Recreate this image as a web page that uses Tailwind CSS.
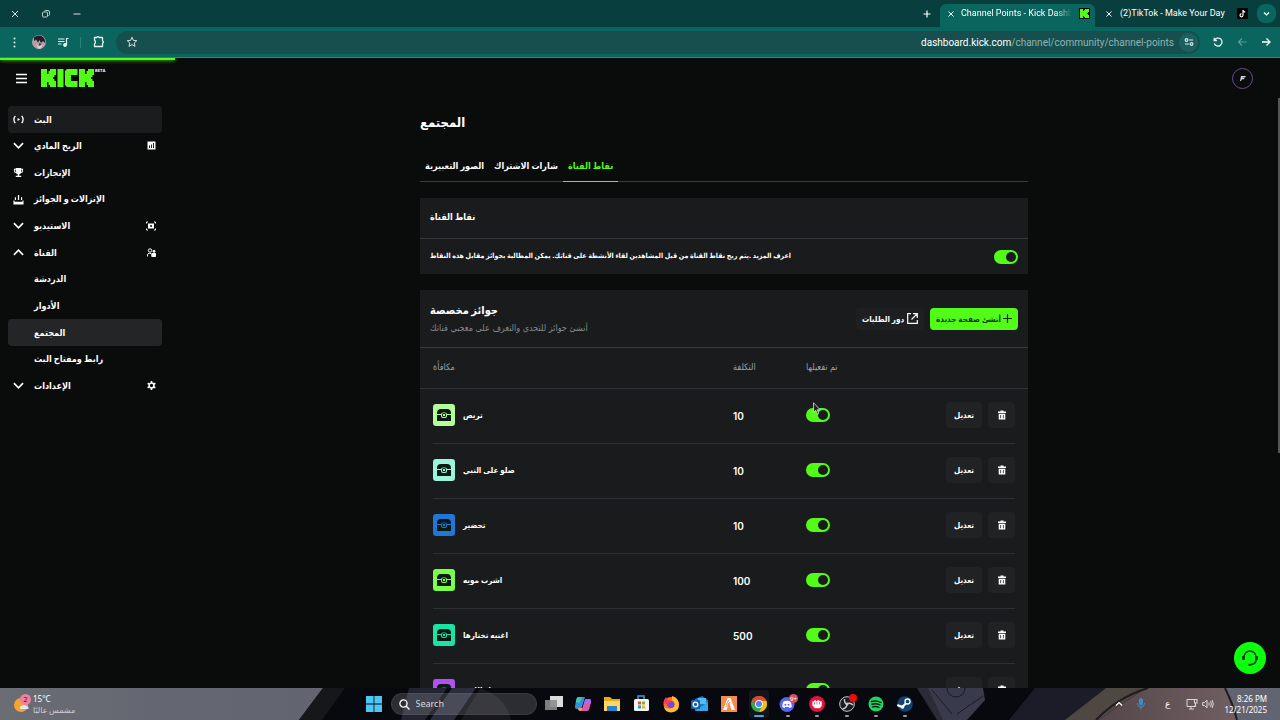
<!DOCTYPE html>
<html lang="ar">

<head>
    <meta charset="utf-8">
    <script src="https://cdn.jsdelivr.net/npm/@tailwindcss/browser@4"></script>
    <title>Channel Points - Kick Dashboard</title>
</head>

<body class="h-screen overflow-hidden flex flex-col bg-[#0a0b0b] text-white font-['Inter','DejaVu_Sans_Condensed',sans-serif]">

    <!-- browser tabs -->
    <header class="font-['Roboto',sans-serif]">
        <div class="h-[27px] bg-[#083e3d] flex items-end justify-between pl-2 pr-1">
            <div class="flex items-center gap-[17px] h-[27px]">
                <button aria-label="Close"><svg class="size-[14px]" viewBox="0 0 14 14" fill="none" stroke="#d5e4e3"><path d="M4 4l6 6M10 4l-6 6" /></svg></button>
                <button aria-label="Restore"><svg class="size-[14px]" viewBox="0 0 14 14" fill="none" stroke="#b9cfce"><rect x="3.5" y="5" width="5" height="5" rx="1" /><path d="M5.500 4.500q0-1 1-1h2.500q1.500 0 1.500 1.500v2.500q0 1-1 1" /></svg></button>
                <button aria-label="Minimize"><svg class="size-[14px]" viewBox="0 0 14 14" fill="none" stroke="#d5e4e3"><path d="M3.500 7h7" /></svg></button>
            </div>
            <div class="flex items-end">
                <button class="h-[27px] w-[26px] flex items-center justify-center" aria-label="New tab"><svg class="size-[8px]" viewBox="0 0 8 8" stroke="#fff" stroke-width="1.200"><path d="M4 .5v7M.5 4h7" /></svg></button>
                <div class="h-[23px] w-[155px] bg-[#0b655f] rounded-t-md flex items-center pl-2 pr-[5px] pb-1 gap-[7px]">
                    <button aria-label="Close tab"><svg class="size-[6px]" viewBox="0 0 6 6" stroke="#fff"><path d="M.5.5l5 5M5.500.5l-5 5" /></svg></button>
                    <span class="flex-1 text-[9px] whitespace-nowrap overflow-hidden mask-r-from-85%">Channel Points - Kick Dashboard</span>
                    <svg class="size-[11px]" viewBox="0 0 11 11"><rect width="11" height="11" fill="#000" /><path fill="#53fc18" d="M1 1h3v2h1V2h1V1h4v3H9v1H8v1h1v1h1v3H6V9H5V8H4v2H1z" /></svg>
                </div>
                <div class="h-[23px] w-[158px] flex items-center pl-[11px] pr-[5px] pb-1 gap-[8px]">
                    <button aria-label="Close tab"><svg class="size-[6px]" viewBox="0 0 6 6" stroke="#fff"><path d="M.5.5l5 5M5.500.5l-5 5" /></svg></button>
                    <span class="flex-1 text-[9px] whitespace-nowrap">(2)TikTok - Make Your Day</span>
                    <svg class="size-[11px]" viewBox="0 0 11 11"><rect width="11" height="11" fill="#000" /><path d="M6 2v5.300a1.500 1.500 0 1 1-1.500-1.500M6 2.200q.3 1.800 2.200 2" fill="none" stroke="#fff" stroke-width="1.200" /></svg>
                </div>
                <button class="mb-1 ml-1 size-[19px] rounded-lg bg-[#0b655f] flex items-center justify-center" aria-label="Search tabs"><svg class="size-[7px]" viewBox="0 0 7 7" fill="none" stroke="#fff" stroke-width="1.200"><path d="M1 2.500l2.500 2.500L6 2.500" /></svg></button>
            </div>
        </div>
        <!-- toolbar -->
        <div class="h-[31px] bg-[#0b655f] border-b border-[#3d7d79] flex items-center px-[8px]">
            <button aria-label="Menu"><svg class="size-[13px]" viewBox="0 0 13 13" fill="#e3f1f0"><circle cx="6.500" cy="2.500" r="1" /><circle cx="6.500" cy="6.500" r="1" /><circle cx="6.500" cy="10.500" r="1" /></svg></button>
            <button class="ml-[11px]" aria-label="Profile">
                <svg class="size-[14px]" viewBox="0 0 14 14"><circle cx="7" cy="7" r="7" fill="#b79ba6" /><path d="M2 2.500Q7-1.500 12 3q1.500 3 1 5L11 6 9 8 7.500 5 6 7.500 4 4.500 2 6z" fill="#221e25" /><path d="M4 9l3 2.500L11 9l-2 4.500-3 .3z" fill="#e0c9d0" /><path d="M7 8l2.500 1-2 2z" fill="#3c2b35" /></svg>
            </button>
            <button class="ml-[11px]" aria-label="Media"><svg class="size-[12px]" viewBox="0 0 12 12" fill="none" stroke="#e3f1f0" stroke-width="1.200"><path d="M1 3h6.500M1 5.500h6.500M1 8h3.500M9.500 9V2.500h2" /><circle cx="8" cy="9" r="1.300" fill="#e3f1f0" /></svg></button>
            <span class="ml-[11px] w-px h-[11px] bg-[#2d817b]"></span>
            <button class="ml-[11px]" aria-label="Extensions"><svg class="size-[14px]" viewBox="0 0 14 14" fill="none" stroke="#e3f1f0" stroke-width="1.300"><path d="M2.500 2.500h2.200q1.300-1.800 2.600 0h3.200v3.200q2 1.300 0 2.600v3.200h-8V8.800q2-1.800 0-3.600z" stroke-linejoin="round" /></svg></button>
            <div class="ml-[10px] flex-1 h-[23px] rounded-full bg-[#174f4e] flex items-center pl-[10px] pr-[2px]">
                <button aria-label="Bookmark"><svg class="size-[12px]" viewBox="0 0 12 12" fill="none" stroke="#cfe2e1"><path d="M6 1.200l1.400 3.200 3.400.3-2.600 2.300.8 3.400-3-1.800-3 1.800.8-3.400L1.200 4.700l3.400-.3z" /></svg></button>
                <span class="flex-1 text-right text-[10px] text-[#8fb4b2]"><span class="text-white">dashboard.kick.com</span>/channel/community/channel-points</span>
                <button class="ml-[5px] size-[19px] rounded-full bg-[#1c615f] flex items-center justify-center" aria-label="Site information"><svg class="size-[10px]" viewBox="0 0 10 10" fill="none" stroke="#dcebea" stroke-width="1.200"><circle cx="2.500" cy="3" r="1.300" /><path d="M5 3h4M1 7h4" /><circle cx="7.500" cy="7" r="1.300" /></svg></button>
            </div>
            <div class="flex items-center gap-[12px] ml-[12px]">
                <button aria-label="Reload"><svg class="size-[12px]" viewBox="0 0 12 12" fill="none" stroke="#e3f1f0" stroke-width="1.300"><path d="M2.500 4.200A4 4 0 1 1 2.300 7.500M2.200 1.800v2.700h2.700" /></svg></button>
                <button aria-label="Forward"><svg class="size-[12px]" viewBox="0 0 12 12" fill="none" stroke="#5b9c97" stroke-width="1.200"><path d="M10.500 6h-8M6 2.500L2.500 6 6 9.500" /></svg></button>
                <button aria-label="Back"><svg class="size-[12px]" viewBox="0 0 12 12" fill="none" stroke="#fff" stroke-width="1.300"><path d="M2 6h8M6.500 2.500L10 6 6.500 9.500" /></svg></button>
            </div>
        </div>
    </header>

    <div class="relative flex-1 min-h-0 overflow-hidden">
        <!-- page load bar -->
        <div class="absolute -top-px left-0 h-[3px] w-[175px] bg-[#53fc18] shadow-[0_0_4px_#53fc18]"></div>

        <div class="h-10 flex items-center justify-between pl-[15px] pr-[27px]">
            <div class="flex items-center gap-[13px]">
                <button aria-label="القائمة"><svg class="size-[13px]" viewBox="0 0 13 13" stroke="#fff" stroke-width="1.300"><path d="M1 2.500h11M1 6.500h11M1 10.500h11" /></svg></button>
                <a href="#" class="flex items-start gap-px" aria-label="Kick">
                    <svg class="w-[53px] h-[18px]" viewBox="0 0 53 18" fill="#53fc18"><path d="M0 0h6v5h1.500V2H9V0h6v6h-1.500v2H12v2h1.500v2H15v6H9v-2H7.500v-3H6v5H0zM16.500 0h6v18h-6zM26 0h10.500v6H30v6h6.500v6H26l-2-2V2zM38 0h6v5h1.500V2H47V0h6v6h-1.500v2H50v2h1.500v2H53v6h-6v-2h-1.500v-3H44v5h-6z" /></svg>
                    <span class="text-[4px] leading-[4px] font-bold">BETA</span>
                </a>
            </div>
            <button class="size-[21px] rounded-full border border-[#6c4c96] flex items-center justify-center" aria-label="الحساب"><svg class="w-[6px] h-[5px]" viewBox="0 0 6 5" fill="#d9d2ea"><path d="M1 0h5L5 1.500H2.500V2h2L4 3.200H2L1 5H0z" /></svg></button>
        </div>

        <div class="flex">
            <nav class="w-[170px] shrink-0 pt-2 px-2">
                <ul id="menu" class="grid auto-rows-fr h-[293px] text-[9px] font-bold"></ul>
            </nav>

            <main class="flex-1 flex justify-center pr-[2px]">
                <div class="w-full max-w-[608px] pt-[14px]">
                    <h1 class="text-[13px] leading-[20px] font-bold">المجتمع</h1>

                    <div class="mt-[18px] h-8 flex border-b border-[#3a3c3f] text-[9px] font-bold">
                        <a href="#" class="px-[5px] leading-[31px]">الصور التعبيرية</a>
                        <a href="#" class="px-[5px] leading-[31px]">شارات الاشتراك</a>
                        <a href="#" class="px-[5px] leading-[31px] h-8 border-b border-[#53fc18] text-[#53fc18]">نقاط القناة</a>
                    </div>

                    <section class="mt-4 bg-[#191b1d]">
                        <h2 class="h-10 px-[10px] leading-[38px] text-[9px] font-bold">نقاط القناة</h2>
                        <div class="h-9 px-[10px] border-t border-[#333639] flex items-center justify-between">
                            <label for="points" dir="rtl" class="text-[7px] font-bold">اعرف المزيد .يتم ربح نقاط القناة من قبل المشاهدين لقاء الأنشطة على قناتك. يمكن المطالبة بجوائز مقابل هذه النقاط</label>
                            <input type="checkbox" id="points" checked class="appearance-none w-6 h-[14px] rounded-full bg-[#53fc18] flex items-center justify-end pr-[2px] before:size-[10px] before:rounded-full before:bg-[#191b1d]">
                        </div>
                    </section>

                    <section class="mt-4 bg-[#191b1d]">
                        <div class="h-[57px] px-[10px] flex items-center justify-between">
                            <div>
                                <h2 class="text-[11px] leading-[18px] font-bold">جوائز مخصصة</h2>
                                <p class="text-[9px] leading-[18px] text-[#85898d]">أنشئ جوائز للتحدي والتعرف على معجبي قناتك</p>
                            </div>
                            <div class="flex gap-[6px] text-[8px] font-bold whitespace-nowrap">
                                <button class="h-[22px] w-[68px] rounded-sm bg-[#1d1f21] flex items-center justify-center gap-[3px]">دور الطلبات
                                    <svg class="size-[11px] shrink-0" viewBox="0 0 11 11" fill="none" stroke="#fff" stroke-width="1.200"><path d="M4 .7H.7v9.600h9.600V7M6 .7h4.300V5M10.300.7L4.500 6.500" /></svg>
                                </button>
                                <button class="h-[22px] w-[88px] rounded-sm bg-[#53fc18] text-[#12310a] flex items-center justify-center gap-[2px]">أنشئ صفحة جديدة
                                    <svg class="size-[9px] shrink-0" viewBox="0 0 10 10" stroke="#0d2507" stroke-width="1.300"><path d="M5 0v10M0 5h10" /></svg>
                                </button>
                            </div>
                        </div>
                        <table class="w-full table-fixed border-t border-[#3a3c3f] text-left">
                            <thead>
                                <tr class="h-[41px] border-b border-[#303235] text-[9px] text-[#9aa1a8]">
                                    <td class="w-[13px]"></td>
                                    <th class="w-[300px] pb-[3px] font-medium">مكافأة</th>
                                    <th class="w-[73px] pb-[3px] font-medium">التكلفة</th>
                                    <th class="pb-[3px] font-medium">تم تفعيلها</th>
                                    <td></td>
                                    <td class="w-[13px]"></td>
                                </tr>
                            </thead>
                            <tbody id="rewards"></tbody>
                        </table>
                    </section>
                </div>
            </main>
        </div>

        <div class="absolute right-0 top-10 w-[2px] h-[355px] bg-[#55585b]"></div>

        <button class="absolute right-[14px] bottom-[14px] size-8 rounded-full bg-[#0cff0c] flex items-center justify-center" aria-label="الدعم">
            <svg class="size-[18px]" viewBox="0 0 18 18" fill="none" stroke="#063806" stroke-width="1.500"><path d="M3 11V8a6 6 0 0 1 12 0v3q0 4-5 4.500" /><path d="M2.200 7v4M15.800 7v4" stroke-width="2.200" /><path d="M7.500 15.800h3" stroke-width="2" /></svg>
        </button>

        <!-- mouse pointer -->
        <svg class="absolute left-[813px] top-[344px] w-[8px] h-[13px]" viewBox="0 0 8 13" fill="#222" stroke="#ddd" stroke-width=".8"><path d="M.5.7v9.600l2.200-2 1.600 3.700 1.500-.6-1.600-3.600h3z" /></svg>
    </div>

    <!-- taskbar -->
    <footer class="relative h-8 bg-[#08090f] font-['Noto_Sans','DejaVu_Sans',sans-serif]">
        <svg class="absolute inset-0 w-full h-full" viewBox="0 0 1280 32" preserveAspectRatio="none">
            <defs>
                <linearGradient id="sky"><stop offset="0" stop-color="#6b6d73" /><stop offset=".5" stop-color="#646672" /><stop offset="1" stop-color="#62656f" /></linearGradient>
                <linearGradient id="skin"><stop offset="0" stop-color="#54474a" /><stop offset="1" stop-color="#705f63" /></linearGradient>
            </defs>
            <path d="M0 0h323l-24 32H0z" fill="url(#sky)" />
            <path d="M323 0h22l-23 32h-23z" fill="#15171b" />
            <path d="M409 0h38l-22 32h-24z" fill="#222431" />
            <path d="M452 0h24l-22 32h-24z" fill="#2b2c3c" />
            <path d="M480 0q25 8 31 32h-50z" fill="#17171e" />
            <path d="M917 0h26l22 32h-28z" fill="#2b2c37" />
            <path d="M928 0h55l2 12-18 20h-24z" fill="#393a4c" />
            <path d="M1035 0h71l-40 32h-57z" fill="#1c1c29" />
            <path d="M1106 0h40l-48 32h-33z" fill="#4f4742" />
            <path d="M1146 0h82l9 32h-139z" fill="url(#skin)" />
            <path d="M1226 0h54v32h-43z" fill="#626471" />
            <path d="M1148 0q-30 9-52 32M1225 0q8 16 12 32" fill="none" stroke="#211c20" stroke-width="2" />
            <circle cx="956" cy="0" r="9" fill="none" stroke="#191a24" />
            <path d="M932 2l20 24M957 26l26-18" stroke="#191a24" />
        </svg>

        <div class="relative h-full grid grid-cols-[1fr_auto_1fr] items-center">
            <div class="flex items-center pl-[13px] gap-[2px]">
                <svg class="w-[18px] h-[20px]" viewBox="0 0 18 20"><circle cx="8" cy="11" r="7" fill="#f4a52e" /><path d="M7 15q-.5-3 2-3 2-2.500 4 0 3 0 2.500 3z" fill="#dfe7f6" /><circle cx="12.500" cy="5.500" r="5.500" fill="#ee7fa0" /><text x="12.500" y="8" font-size="7" text-anchor="middle" fill="#3c1420">2</text></svg>
                <div class="text-[8px] leading-[11px]">
                    <div>15°C</div>
                    <div class="text-[#cdced4]">مشمس غالبًا</div>
                </div>
            </div>

            <div class="flex items-center gap-[8px]">
                <button aria-label="Start"><svg class="w-[18px] h-[16px]" viewBox="0 0 16 16"><path fill="#4fc7f5" d="M0 0h7.600v7.600H0zM8.400 0H16v7.600H8.400zM0 8.400h7.600V16H0zM8.400 8.400H16V16H8.400z" /></svg></button>
                <label class="w-[146px] h-[22px] rounded-full bg-white/15 border border-white/5 flex items-center pl-[7px] gap-[6px]">
                    <svg class="size-[11px] shrink-0" viewBox="0 0 11 11" fill="none" stroke="#fff" stroke-width="1.300"><circle cx="4.500" cy="4.500" r="3.600" /><path d="M7.200 7.200L10.500 10.500" /></svg>
                    <input type="text" placeholder="Search" aria-label="Search" class="w-full bg-transparent text-[9px] placeholder:text-[#d9d9dd] outline-none">
                </label>
                <div id="apps" class="flex justify-between w-[372px] h-8 items-center -ml-px"></div>
            </div>

            <div class="flex items-center justify-end pr-[13px]">
                <svg class="w-[8px] h-[6px] mr-[14px]" viewBox="0 0 8 6" fill="none" stroke="#fff" stroke-width="1.200"><path d="M1 4.500l3-3 3 3" /></svg>
                <svg class="w-[8px] h-[12px] mr-[20px]" viewBox="0 0 8 12" fill="none" stroke="#4489c8"><rect x="2.500" y=".5" width="3" height="6.500" rx="1.500" fill="#4489c8" /><path d="M.5 5q0 4 3.500 4t3.500-4M4 9v2.500" /></svg>
                <span class="text-[9px] mr-[16px]">ع</span>
                <svg class="size-[12px] mr-[4px]" viewBox="0 0 12 12" fill="none" stroke="#ddd8da"><path d="M8 1.500H1v7h8V7M3 11h5M5 8.500V11M9.500 5v4" /><rect x="8.500" y="1.500" width="2.500" height="3.500" /></svg>
                <svg class="w-[12px] h-[10px] mr-[10px]" viewBox="0 0 12 10" fill="none" stroke="#ddd8da"><path d="M.7 3.500v3h2L5 9V1L2.700 3.500zM6.800 3.500q1 1.500 0 3M8.500 2.200q2 2.800 0 5.600M10 1q2.800 4 0 8" /></svg>
                <div class="text-[8px] leading-[11px] text-right">
                    <div>8:26 PM</div>
                    <div>12/21/2025</div>
                </div>
            </div>
        </div>
    </footer>
</body>
<script>
    const down = `<svg class="size-[11px]" viewBox="0 0 12 12" fill="none" stroke="#fff" stroke-width="1.800"><path d="M1 3.500l5 5 5-5" /></svg>`;
    const up = `<svg class="size-[11px]" viewBox="0 0 12 12" fill="none" stroke="#fff" stroke-width="1.800"><path d="M1 8.500l5-5 5 5" /></svg>`;
    const live = `<svg class="size-[11px]" viewBox="0 0 12 12" fill="none" stroke="#fff" stroke-width="1.400"><path d="M2.500 2Q-.5 6 2.500 10M9.500 2q3 4 0 8" /><path d="M5 4.300v3.400L7.800 6z" fill="#fff" stroke="none" /></svg>`;
    const trophy = `<svg class="size-[11px]" viewBox="0 0 12 12" fill="#fff"><path d="M3 1h6v1h2v2.500Q11 6.200 8.700 6.500 8 7.700 6.800 8v1.500H9V11H3V9.500h2.200V8Q4 7.700 3.300 6.500 1 6.200 1 4.500V2h2zM2 3v1.500q0 .7 1 .9V3zm7 0v2.400q1-.2 1-.9V3z" fill-rule="evenodd" /></svg>`;
    const drops = `<svg class="size-[11px]" viewBox="0 0 12 12" fill="#fff"><path d="M.5 7h1.200v1.500h8.600V7h1.200v4.500H.5zM5.300 1h1.400v5.500H5.300zM2 3.500h1.300v3H2zM8.700 3.500H10v3H8.700z" /></svg>`;
    const chart = `<svg class="size-[9px]" viewBox="0 0 9 9"><path d="M.5.5h8v8h-8z" fill="#fff" /><path d="M2 4.500h1V7H2zM4 3.500h1V7H4zM6 2h1v5H6z" fill="#222" /></svg>`;
    const studio = `<svg class="size-[10px]" viewBox="0 0 10 10" fill="none" stroke="#fff"><path d="M.5 2.500v-1.500h1.500M8 1h1.500v1.500M9.500 7.500V9H8M2 9H.5V7.500" /><rect x="2" y="2.500" width="6" height="5" fill="#fff" stroke="none" /><circle cx="5" cy="5" r="1" fill="#111" stroke="none" /></svg>`;
    const people = `<svg class="size-[9px]" viewBox="0 0 9 9" fill="none" stroke="#fff"><circle cx="3" cy="2.500" r="1.700" /><path d="M.5 8.500v-2q0-1 2-1H4" /><circle cx="7" cy="3.300" r="1" fill="#fff" /><path d="M4.800 5.500h3.700v3H4.800z" fill="#fff" /></svg>`;
    const gear = `<svg class="size-[9px]" viewBox="0 0 10 10"><circle cx="5" cy="5" r="2.700" fill="none" stroke="#fff" stroke-width="1.700" /><path d="M5 0v2M5 8v2M.7 2.500l1.700 1M7.600 6.500l1.700 1M.7 7.500l1.700-1M7.600 3.500l1.700-1" stroke="#fff" stroke-width="1.800" /></svg>`;

    const menu = [
        { text: "البث", icon: live, bg: "bg-[#1b1c1d]" },
        { text: "الربح المادي", icon: down, end: chart },
        { text: "الإنجازات", icon: trophy },
        { text: "الإنزالات و الجوائز", icon: drops },
        { text: "الاستيديو", icon: down, end: studio },
        { text: "القناة", icon: up, end: people },
        { text: "الدردشة" },
        { text: "الأدوار" },
        { text: "المجتمع", bg: "bg-[#232527]" },
        { text: "رابط ومفتاح البث" },
        { text: "الإعدادات", icon: down, end: gear },
    ];

    document.getElementById("menu").innerHTML = menu.map((item) => `
        <li class="flex">
            <a href="#" class="flex-1 flex items-center rounded-sm pl-[5px] pr-[6px] ${item.bg || ""}">
                <span class="w-[21px]">${item.icon || ""}</span>
                <span class="flex-1 whitespace-nowrap">${item.text}</span>
                ${item.end || ""}
            </a>
        </li>
    `).join("");

    const rewards = [
        { name: "تريص", cost: 10, color: "#b5fd98" },
        { name: "صلو على النبي", cost: 10, color: "#9af5dc" },
        { name: "تحضير", cost: 10, color: "#1f77d8" },
        { name: "اشرب مويه", cost: 100, color: "#7bfd4b" },
        { name: "اغنيه تختارها", cost: 500, color: "#1be3a5" },
        { name: "تختار اللعبة", cost: "", color: "#b052f0" },
    ];

    document.getElementById("rewards").innerHTML = rewards.map((reward, i) => `
        <tr class="h-[55px] text-[10px] font-semibold">
            <td></td>
            <td class="border-b border-[#2d2f32] pb-[2px]">
                <div class="flex items-center gap-2 text-[8px] font-bold">
                    <svg class="size-[22px]" viewBox="0 0 22 22">
                        <rect width="22" height="22" rx="3" fill="${reward.color}" />
                        <path d="M4 10V9q0-4 4-4h6q4 0 4 4v1zM4 11h14v6H4z" fill="#0a1a12" />
                        <rect x="8" y="8.500" width="6" height="5.500" rx="2" fill="${reward.color}" />
                        <rect x="9" y="9" width="4" height="4" rx="1.500" fill="#0a1a12" />
                        <rect x="10" y="10" width="2" height="2" fill="${reward.color}" />
                    </svg>
                    ${reward.name}
                </div>
            </td>
            <td class="border-b border-[#2d2f32]">${reward.cost}</td>
            <td class="border-b border-[#2d2f32] pb-[3px]">
                <input type="checkbox" checked aria-label="${reward.name}" id="reward_${i}"
                    class="appearance-none w-6 h-[14px] rounded-full bg-[#53fc18] flex items-center justify-end pr-[2px] before:size-[10px] before:rounded-full before:bg-[#191b1d]">
            </td>
            <td class="border-b border-[#2d2f32] pb-[2px]">
                <div class="flex justify-end gap-[6px]">
                    <button class="w-[36px] h-[26px] rounded-sm bg-[#202224] text-[8px] font-bold">تعديل</button>
                    <button class="w-[27px] h-[26px] rounded-sm bg-[#202224] flex items-center justify-center" aria-label="حذف">
                        <svg class="w-[8px] h-[10px]" viewBox="0 0 8 10" fill="#fff"><path d="M2.500.5h3v1H8V3H0V1.500h2.500zM.7 3.700h6.600v5.800H.7zM2.300 5v3.300h.8V5zm2.600 0v3.300h.8V5z" fill-rule="evenodd" /></svg>
                    </button>
                </div>
            </td>
            <td></td>
        </tr>
    `).join("");

    const apps = [
        { name: "Task view", svg: `<rect x="6" y="2" width="13" height="11" fill="#dcdcdc" /><rect x="1" y="6" width="12" height="10" fill="#8c8c8c" opacity=".9" />` },
        { name: "Copilot", svg: `<path d="M5.500 3H12L9 13q-.5 2-3 2H4q-2.500 0-2-3L3.500 5q.5-2 2-2z" fill="#2f8fe8" /><path d="M3.500 5q.5-2 2-2H9L7 8.500H2.700z" fill="#45c4a0" /><path d="M8 17h6q2 0 2.500-3L18 8q.5-3-2-3h-2q-2 0-2.500 2L9 15z" fill="#d95aa8" /><path d="M12 5h4q2.500 0 2 3l-.5 2h-6z" fill="#a66bf0" /><path d="M5 14h4.500l-1 3H7q-2 0-2-3z" fill="#f0a53c" />` },
        { name: "Explorer", svg: `<path d="M2 3h6l2 2h8v12H2z" fill="#e9a91c" /><path d="M2 7h16v10H2z" fill="#fdd663" /><path d="M5 12h10v5H5z" fill="#2684c9" />` },
        { name: "Store", svg: `<path d="M7 5V2h6v3" fill="none" stroke="#3e9ce0" stroke-width="1.500" /><rect x="3" y="5" width="15" height="12" rx="1.500" fill="#f2f4f6" /><path d="M7 7.500h3v3H7z" fill="#e8502a" /><path d="M11 7.500h3v3h-3z" fill="#76b82a" /><path d="M7 11.500h3v3H7z" fill="#2a95dc" /><path d="M11 11.500h3v3h-3z" fill="#f5b51e" />` },
        { name: "Firefox", svg: `<circle cx="10" cy="10.500" r="7.500" fill="#ff6b2c" /><path d="M11 2q7 2 7 9t-8 7.500Q4 18 3 13q7 4 10-1 1-4-2-6z" fill="#ffbd35" /><circle cx="10" cy="10.500" r="3.600" fill="#7c45d8" /><path d="M2.500 9Q3 5 5 3l1.500 3Q9 6 10 8l-4 2z" fill="#f5395f" />` },
        { name: "Outlook", svg: `<path d="M5 5l7-3 6 4v11H5z" fill="#1a78c8" /><path d="M8 4h8v6H8z" fill="#56bdf2" /><path d="M5 17l13-9v9z" fill="#37a4e8" /><rect x="1" y="6" width="9" height="9" rx="1" fill="#0e62b0" /><circle cx="5.500" cy="10.500" r="2.300" fill="none" stroke="#fff" stroke-width="1.300" />` },
        { name: "FiveM", svg: `<rect x="2" y="2" width="16" height="16" fill="#f58d50" /><path d="M8.500 4h3L16 16h-3.500L10 8l-2.500 8H4z" fill="#fff" /><path d="M10 6l-3 5M11 8l-4 5" stroke="#f58d50" />` },
        { name: "Chrome", bg: "bg-white/5", active: "w-[10px] h-[2px] bg-[#4ba3e3]", svg: `<circle cx="10" cy="10" r="8" fill="#34a853" /><path d="M3.100 6A8 8 0 0 1 17.500 7H10l-3.300 5z" fill="#ea4335" /><path d="M17.300 6.700A8 8 0 0 1 10 18l3.500-6.500L12 7z" fill="#fbbc04" /><circle cx="10" cy="10" r="3.900" fill="#fff" /><circle cx="10" cy="10" r="3" fill="#4285f4" />` },
        { name: "Discord", active: "w-[4px] h-[2px] bg-[#9a9a9e]", svg: `<circle cx="9" cy="10.500" r="7.500" fill="#5865f2" /><path d="M5.500 7.500q3.500-1.500 7 0 1.500 3 1.300 5.500l-2.300 1-.7-1H7.200l-.7 1-2.300-1Q4 10.500 5.500 7.500z" fill="#fff" /><circle cx="7.400" cy="10.700" r="1" fill="#5865f2" /><circle cx="10.600" cy="10.700" r="1" fill="#5865f2" /><circle cx="15.500" cy="4.500" r="4.500" fill="#d8505c" /><text x="15.500" y="7" font-size="6" text-anchor="middle" fill="#fff">9+</text>` },
        { name: "Fist", active: "w-[4px] h-[2px] bg-[#9a9a9e]", svg: `<circle cx="10" cy="10" r="8" fill="#e0143c" /><path d="M5 7h2V6h2.500v1H10V6h2.500v1H15v5l-2 2.500H8L5 11.500zM7.500 8v2.500M10 8v2.500M12.500 8v2.500" fill="#fff" stroke="#e0143c" stroke-width=".6" />` },
        { name: "OBS", active: "w-[4px] h-[2px] bg-[#9a9a9e]", svg: `<circle cx="10" cy="10" r="7.300" fill="#1c1c20" stroke="#c9c9cc" /><path d="M10 10q-3-1-2.500-5M10 10q3-2 6 1M10 10q0 4-4.500 5" fill="none" stroke="#c9c9cc" stroke-width="1.400" /><circle cx="10" cy="10" r="1.500" fill="#c9c9cc" /><circle cx="16" cy="4" r="4" fill="#f00a0a" />` },
        { name: "Spotify", active: "w-[4px] h-[2px] bg-[#9a9a9e]", svg: `<circle cx="10" cy="10" r="7.500" fill="#1ed760" /><path d="M5.500 7.500q5-1.500 9.500 1M6 10.200q4.500-1.200 8 .8M6.500 12.800q3.500-1 6.500.7" fill="none" stroke="#0c1a10" stroke-width="1.400" stroke-linecap="round" />` },
        { name: "Steam", active: "w-[4px] h-[2px] bg-[#9a9a9e]", svg: `<circle cx="10" cy="10" r="7.800" fill="#144270" /><path d="M2.300 11l5 2 4-4" fill="none" stroke="#fff" stroke-width="2" /><circle cx="12.500" cy="7.500" r="2.500" fill="#144270" stroke="#fff" stroke-width="1.300" /><circle cx="7.500" cy="13" r="1.800" fill="#fff" />` },
    ];

    document.getElementById("apps").innerHTML = apps.map((app) => `
        <button class="relative h-7 rounded-sm flex items-center ${app.bg || ""}" aria-label="${app.name}">
            <svg class="size-[20px]" viewBox="0 0 20 20">${app.svg}</svg>
            <span class="absolute bottom-px left-1/2 -translate-x-1/2 rounded-full ${app.active || ""}"></span>
        </button>
    `).join("");
</script>

</html>
